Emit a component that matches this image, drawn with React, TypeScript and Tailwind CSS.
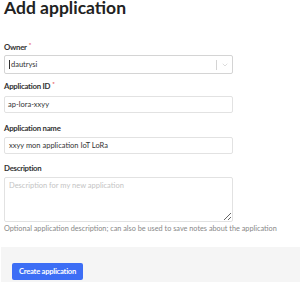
import { ChevronDown } from "lucide-react";

const font = { fontFamily: "Lato, 'Noto Sans', sans-serif" };

function Label({ text, required }: { text: string; required?: boolean }) {
  return (
    <div className="h-[10px] text-[7.8px] font-bold text-[#333] leading-[10px] tracking-[-0.25px] flex">
      {text}
      {required && <span className="text-[#e5484d] ml-[2px] text-[6px] leading-[6px]">*</span>}
    </div>
  );
}

export default function App() {
  return (
    <div className="w-[300px] h-[282px] bg-white overflow-hidden flex flex-col" style={font}>
      <div className="px-[4px]">
        <h1 className="h-[14px] text-[17.5px] font-bold text-[#222] leading-[14px] pt-[1px]">Add application</h1>

        <div className="mt-[28px]">
          <Label text="Owner" required />
          <div className="mt-[3px] w-[229px] h-[19px] border border-[#d4d4d4] rounded-[2px] flex items-center">
            <span className="flex-1 pl-[4px] text-[7.5px] text-[#333] flex items-center">
              <span className="w-px h-[9px] bg-[#333] mr-[1px]" />
              dautrysi
            </span>
            <span className="w-px h-[10px] bg-[#d4d4d4]" />
            <span className="w-[15px] flex justify-center">
              <ChevronDown size={8} strokeWidth={1.5} className="text-[#bbb]" />
            </span>
          </div>
        </div>

        <div className="mt-[7px]">
          <Label text="Application ID" required />
          <div className="mt-[5px] w-[229px] h-[17px] border border-[#e2e2e2] rounded-[2px] flex items-center pl-[3px] text-[7.5px] text-[#333]">
            ap-lora-xxyy
          </div>
        </div>

        <div className="mt-[10px]">
          <Label text="Application name" />
          <div className="mt-[4px] w-[229px] h-[17px] border border-[#e2e2e2] rounded-[2px] flex items-center pl-[4px] text-[7.5px] text-[#333]">
            xxyy mon application IoT LoRa
          </div>
        </div>

        <div className="mt-[9px]">
          <Label text="Description" />
          <textarea
            className="mt-[4px] block w-[229px] h-[45px] border border-[#e2e2e2] rounded-[2px] px-[4px] py-[3px] text-[7.5px] leading-[10px] text-[#333] placeholder:text-[#c4c4c4] outline-none resize-y"
            placeholder="Description for my new application"
          />
          <div className="mt-[2px] h-[10px] text-[7.3px] text-[#888] leading-[10px] whitespace-nowrap">
            Optional application description; can also be used to save notes about the application
          </div>
        </div>
      </div>

      <div className="mt-auto h-[35px] bg-[#f5f5f5] ml-[1px] px-[11px] pt-[9px]">
        <button className="h-[17px] w-[71px] rounded-[2px] bg-[#3d6ef5] text-white text-[7.6px] font-bold tracking-[-0.25px] leading-[17px] whitespace-nowrap">
          Create application
        </button>
      </div>
    </div>
  );
}
